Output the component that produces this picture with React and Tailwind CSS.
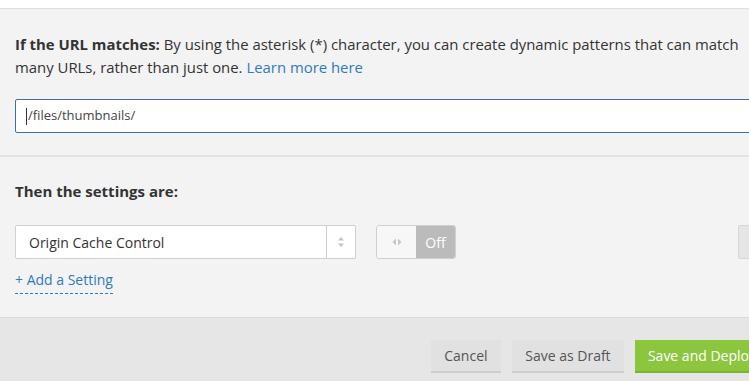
import React from 'react';

const App = () => {
    return (
        <div
            className="w-[749px] h-[381px] overflow-hidden bg-[#f3f3f3] text-[#333] flex flex-col"
            style={{ fontFamily: '"Open Sans", "Noto Sans", sans-serif' }}
        >
            {/* TOP STRIP */}
            <div className="h-[9px] shrink-0 bg-white border-b border-[#dedede]"></div>

            {/* URL MATCH */}
            <div className="px-[15px] pt-[24px] pb-[22px] border-b-2 border-[#e2e2e2]">
                <p className="text-[14.9px] leading-[23px] w-[736px]">
                    <span className="font-bold">If the URL matches:</span> By using the asterisk (*) character, you can create dynamic patterns that can match many URLs, rather than just one.{' '}
                    <span className="text-[#2f7bbf]">Learn more here</span>
                </p>
                <div className="mt-[20px] w-[760px] h-[34px] bg-white border border-[#3a72a6] rounded-[2px] flex items-center pl-[10px] text-[13px] text-[#444]">
                    <span className="w-px h-[17px] bg-[#333] mr-[1px]"></span>
                    /files/thumbnails/
                </div>
            </div>

            {/* SETTINGS */}
            <div className="px-[15px] pt-[23px] flex-1">
                <h3 className="text-[15px] leading-[23px] font-bold">Then the settings are:</h3>

                <div className="mt-[22px] flex items-center">
                    {/* Select */}
                    <div className="w-[341px] h-[34px] bg-white border border-[#cfcfcf] rounded-[2px] flex">
                        <div className="flex-1 flex items-center pl-[13px] text-[14px] text-[#333]">Origin Cache Control</div>
                        <div className="w-[29px] border-l border-[#cfcfcf] flex items-center justify-center">
                            <svg width="8" height="12" viewBox="0 0 8 12">
                                <path d="M4 1 L7 4.5 H1 Z" fill="#c4c4c4" />
                                <path d="M4 11 L7 7.5 H1 Z" fill="#c4c4c4" />
                            </svg>
                        </div>
                    </div>

                    {/* Toggle */}
                    <div className="ml-[20px] w-[80px] h-[34px] border border-[#cfcfcf] rounded-[3px] overflow-hidden flex">
                        <div className="w-[39px] bg-[#f7f7f7] flex items-center justify-center">
                            <svg width="10" height="8" viewBox="0 0 10 8">
                                <path d="M4 0.5 L0.5 4 L4 7.5 Z" fill="#c6c6c6" />
                                <path d="M6 0.5 L9.5 4 L6 7.5 Z" fill="#c6c6c6" />
                            </svg>
                        </div>
                        <div className="flex-1 bg-[#bbbbbb] flex items-center justify-center text-white text-[14px]">Off</div>
                    </div>

                    <div className="ml-auto mr-[-46px] w-[42px] h-[34px] bg-[#e6e6e6] border border-[#d6d6d6] rounded-[2px]"></div>
                </div>

                <div className="mt-[11px] inline-block text-[14px] leading-[20px] pb-[3px] text-[#2f7bbf] border-b border-dashed border-[#2f7bbf]">
                    + Add a Setting
                </div>
            </div>

            {/* FOOTER */}
            <div className="h-[64px] shrink-0 bg-[#e6e6e6] border-t border-[#d9d9d9] flex items-start justify-end pt-[22px] gap-[11px] mr-[-20px]">
                <button className="h-[33px] w-[70px] bg-[#e1e1e1] border-b-2 border-[#cdcdcd] text-[14px] text-[#555]">Cancel</button>
                <button className="h-[33px] w-[112px] bg-[#e1e1e1] border-b-2 border-[#cdcdcd] text-[14px] text-[#555]">Save as Draft</button>
                <button className="h-[33px] px-[13px] bg-[#8cc63f] border-b-2 border-[#7db235] text-[14px] text-white">Save and Deploy</button>
            </div>
        </div>
    );
};

export default App;
